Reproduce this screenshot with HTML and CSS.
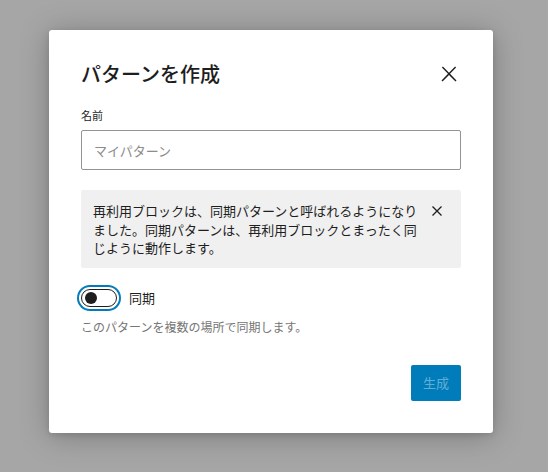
FILE: index.html
```html
<!DOCTYPE html>
<html lang="ja">

<head>
    <meta charset="UTF-8">
    <meta name="viewport" content="width=device-width, initial-scale=1.0">
    <title>パターンを作成</title>

    <link rel="stylesheet" href="styles.css">
</head>

<body>

    <div class="overlay">
        <div class="modal" role="dialog" aria-labelledby="modal-title">
            <div class="modal-header">
                <h1 class="modal-title" id="modal-title">パターンを作成</h1>
                <button type="button" class="icon-btn close-btn" aria-label="閉じる">
                    <svg viewBox="0 0 24 24" width="24" height="24" aria-hidden="true">
                        <path d="M13 11.8l6.1-6.3-1-1-6.1 6.2-6.1-6.2-1 1 6.1 6.3-6.5 6.7 1 1 6.5-6.6 6.5 6.6 1-1z"></path>
                    </svg>
                </button>
            </div>

            <form class="modal-body">
                <!-- Pattern name -->
                <div class="field">
                    <label class="field-label" for="pattern-name">名前</label>
                    <input type="text" id="pattern-name" class="text-input" placeholder="マイパターン">
                </div>

                <!-- Info notice -->
                <div class="notice">
                    <p class="notice-text">再利用ブロックは、同期パターンと呼ばれるようになりました。同期パターンは、再利用ブロックとまったく同じように動作します。</p>
                    <button type="button" class="icon-btn notice-dismiss" aria-label="通知を閉じる">
                        <svg viewBox="0 0 24 24" width="24" height="24" aria-hidden="true">
                            <path d="M7.5 7.5l9 9M16.5 7.5l-9 9"></path>
                        </svg>
                    </button>
                </div>

                <!-- Sync toggle -->
                <div class="toggle-field">
                    <label class="toggle-row">
                        <span class="toggle">
                            <input type="checkbox" class="toggle-input">
                            <span class="toggle-track"></span>
                            <span class="toggle-thumb"></span>
                        </span>
                        <span class="toggle-label">同期</span>
                    </label>
                    <p class="help">このパターンを複数の場所で同期します。</p>
                </div>

                <div class="actions">
                    <button type="submit" class="primary-btn" aria-disabled="true">生成</button>
                </div>
            </form>
        </div>
    </div>

</body>

</html>
```

FILE: styles.css
```css
/* General Styles */
* {
    box-sizing: border-box;
}

body {
    margin: 0;
    font-family: "Noto Sans CJK JP", "Noto Sans", sans-serif;
    color: #1e1e1e;
    background: #a6a6a6;
}

/* Dim backdrop */
.overlay {
    min-height: 100vh;
    display: flex;
    align-items: flex-start;
    padding: 30px 0 0 49px;
}

/* Modal box */
.modal {
    width: 444px;
    background: #fff;
    border-radius: 3px;
    box-shadow: 0 3px 30px rgba(0, 0, 0, 0.25), 0 2px 6px rgba(0, 0, 0, 0.12);
    padding: 0 32px 32px;
}

.modal-header {
    display: flex;
    align-items: center;
    justify-content: space-between;
    padding-top: 26px;
    margin-bottom: 15px;
}

.modal-title {
    margin: 0;
    font-size: 20px;
    font-weight: 500;
    line-height: 28px;
}

/* Icon buttons */
.icon-btn {
    display: flex;
    align-items: center;
    justify-content: center;
    padding: 0;
    border: none;
    background: none;
    cursor: pointer;
    color: #1e1e1e;
}

.icon-btn svg {
    fill: currentColor;
}

.close-btn {
    width: 36px;
    height: 36px;
    margin-right: -6px;
}

/* Name field */
.field-label {
    display: block;
    font-size: 11px;
    font-weight: 400;
    line-height: 16px;
    margin-bottom: 7px;
}

.text-input {
    display: block;
    width: 100%;
    height: 40px;
    padding: 0 12px;
    border: 1px solid #949494;
    border-radius: 2px;
    font-family: inherit;
    font-size: 13px;
    color: #1e1e1e;
    outline: none;
}

.text-input::placeholder {
    color: #8c8c8c;
}

/* Notice */
.notice {
    display: flex;
    align-items: flex-start;
    margin-top: 20px;
    padding: 12px 12px 10px;
    background: #f0f0f0;
    border-radius: 2px;
}

.notice-text {
    flex: 1;
    margin: 0;
    font-size: 13px;
    line-height: 18.6px;
}

.notice-dismiss {
    width: 24px;
    height: 24px;
    margin-top: -3px;
}

.notice-dismiss svg {
    fill: none;
    stroke: currentColor;
    stroke-width: 1.3;
}

/* Toggle */
.toggle-field {
    margin-top: 20px;
}

.toggle-row {
    display: flex;
    align-items: center;
    gap: 12px;
    cursor: pointer;
}

.toggle {
    position: relative;
    width: 36px;
    height: 18px;
    flex-shrink: 0;
}

.toggle-input {
    position: absolute;
    inset: 0;
    margin: 0;
    opacity: 0;
}

.toggle-track {
    display: block;
    width: 100%;
    height: 100%;
    border: 1px solid #1e1e1e;
    border-radius: 9px;
    background: #fff;
    box-shadow: 0 0 0 2px #fff, 0 0 0 4px #007cba;
}

.toggle-thumb {
    position: absolute;
    top: 3px;
    left: 4px;
    width: 12px;
    height: 12px;
    border-radius: 50%;
    background: #1e1e1e;
}

.toggle-label {
    font-size: 13px;
    line-height: 20px;
}

.help {
    margin: 11px 0 0;
    font-size: 12px;
    line-height: 16px;
    color: #757575;
}

/* Footer */
.actions {
    display: flex;
    justify-content: flex-end;
    margin-top: 30px;
}

.primary-btn {
    height: 36px;
    padding: 0 12px;
    border: none;
    border-radius: 2px;
    background: #007cba;
    color: rgba(255, 255, 255, 0.4);
    font-family: inherit;
    font-size: 13px;
    cursor: default;
}
```
